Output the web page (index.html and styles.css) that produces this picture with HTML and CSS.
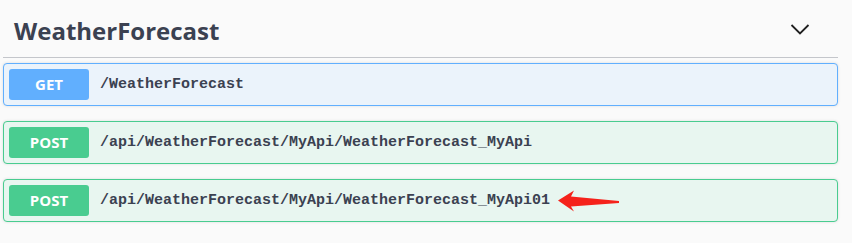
FILE: index.html
```html
<!DOCTYPE html>
<html lang="en">
<head>
    <meta charset="UTF-8">
    <meta name="viewport" content="width=device-width, initial-scale=1.0">
    <title>WeatherForecast</title>
    <link rel="stylesheet" href="styles.css">
</head>
<body>
    <div class="tag-section">
        <h4 class="tag">
            <span class="tag-name">WeatherForecast</span>
            <svg class="arrow-toggle" width="20" height="20" viewBox="0 0 20 20">
                <path d="M1.5 6 L10 14.5 L18.5 6" fill="none" stroke="#1f1f1f" stroke-width="1.8"/>
            </svg>
        </h4>
        <div class="opblock get">
            <span class="method">GET</span>
            <span class="path">/WeatherForecast</span>
        </div>
        <div class="opblock post">
            <span class="method">POST</span>
            <span class="path">/api/WeatherForecast/MyApi/WeatherForecast_MyApi</span>
        </div>
        <div class="opblock post">
            <span class="method">POST</span>
            <span class="path">/api/WeatherForecast/MyApi/WeatherForecast_MyApi01</span>
            <svg class="mark" width="64" height="24" viewBox="0 0 64 24">
                <path d="M0 10.5 L16 0.5 L13 6.5 L61 11 L61 13 L13 16.5 L16 21.5 Z" fill="#f5221b"/>
            </svg>
        </div>
    </div>
</body>
</html>
```

FILE: styles.css
```css
body {
    margin: 0;
    background-color: #fafafa;
    font-family: "Open Sans", sans-serif;
    color: #3b4151;
}
.tag-section {
    padding: 0 14px 0 3px;
}
.tag {
    display: flex;
    align-items: center;
    justify-content: space-between;
    margin: 0 0 5px;
    padding: 13px 28px 8px 11px;
    font-size: 24px;
    line-height: 36px;
    font-weight: 700;
    border-bottom: 1px solid #c4c6cb;
}
.arrow-toggle {
    margin-top: -4px;
}
.opblock {
    display: flex;
    align-items: center;
    padding: 5px;
    margin: 0 0 15px;
    border: 1px solid;
    border-radius: 4px;
    box-shadow: 0 0 3px rgba(0, 0, 0, 0.12);
}
.opblock.get {
    background-color: #ebf3fb;
    border-color: #61affe;
}
.opblock.post {
    background-color: #e8f6f0;
    border-color: #49cc90;
}
.method {
    min-width: 80px;
    padding: 6px 0;
    font-size: 15px;
    line-height: 19px;
    font-weight: 700;
    text-align: center;
    color: #fff;
    border-radius: 3px;
}
.get .method {
    background-color: #61affe;
}
.post .method {
    background-color: #49cc90;
}
.path {
    padding-left: 11px;
    font-family: "Liberation Mono", monospace;
    font-size: 15px;
    font-weight: 700;
    color: #3b4151;
}
.mark {
    margin-left: 8px;
    margin-top: 3px;
}
```
